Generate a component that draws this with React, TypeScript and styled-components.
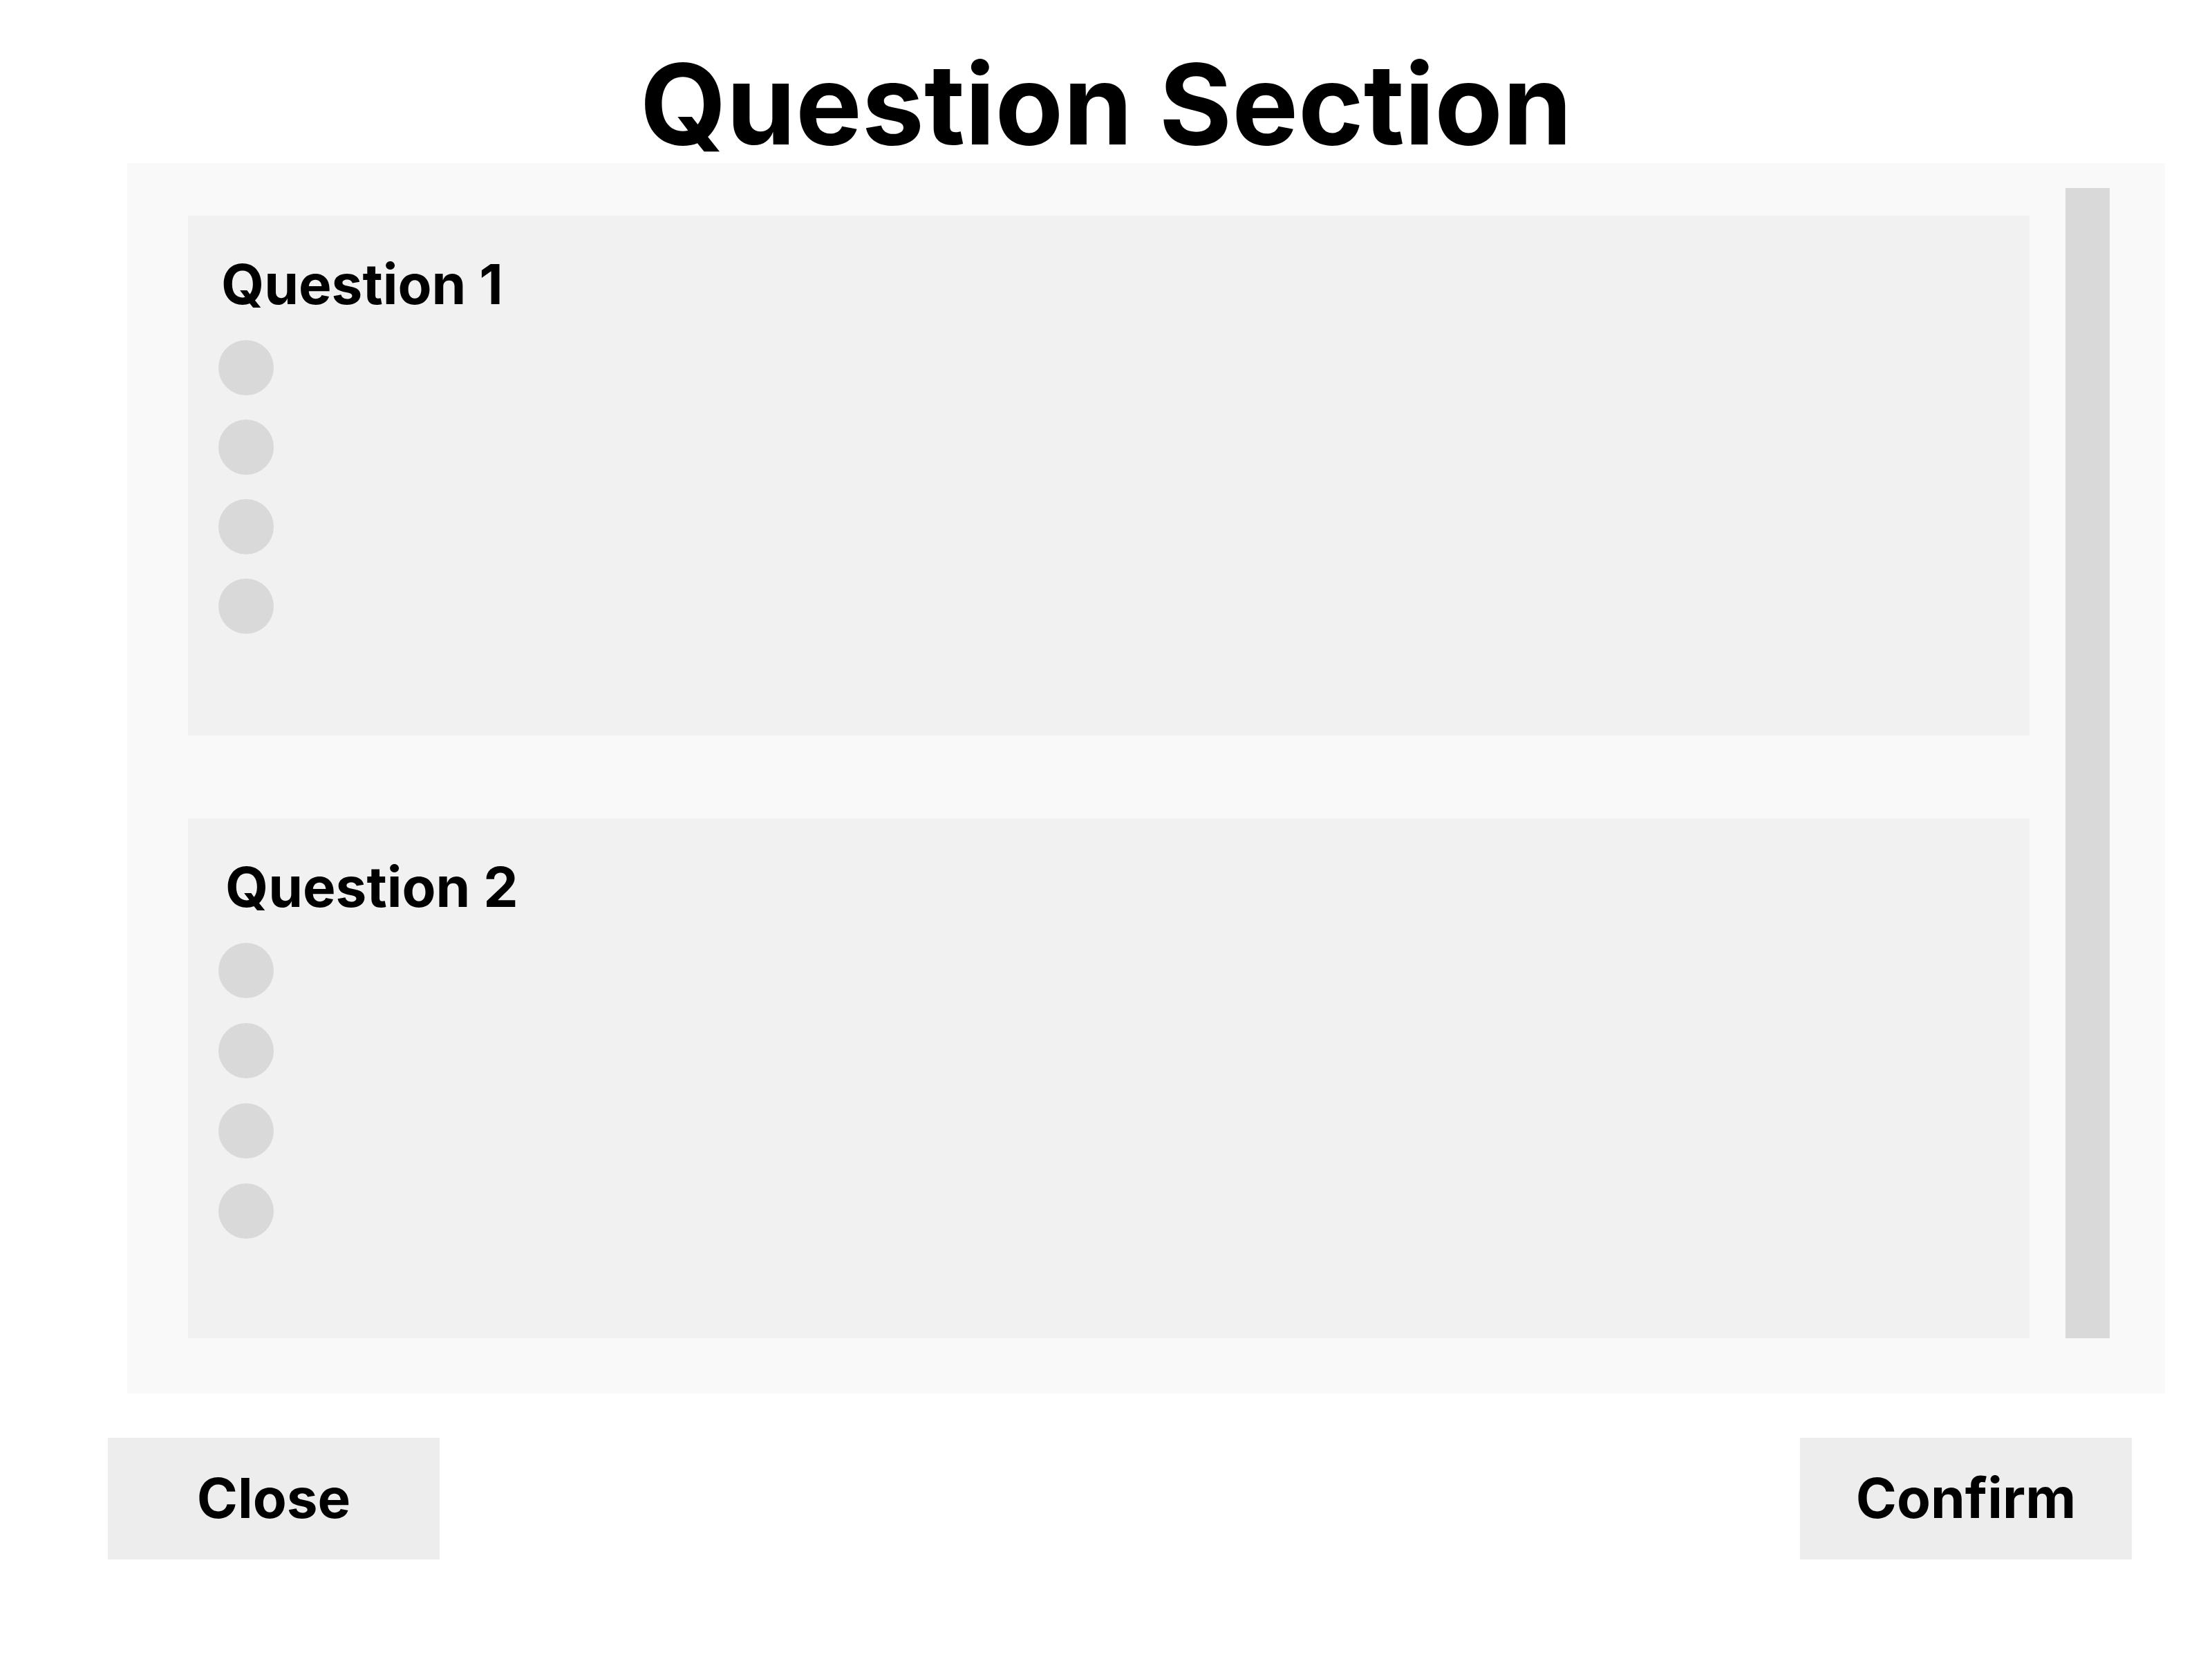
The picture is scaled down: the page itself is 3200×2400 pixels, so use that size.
import React from "react";
import styled, { createGlobalStyle } from "styled-components";

const questions = [
  { title: "Question 1", indent: 4, gap: 35 },
  { title: "Question 2", indent: 10, gap: 36 },
];

const App = () => {
  return (
    <>
      <GlobalStyle />
      <Page>
        <Heading>Question Section</Heading>
        <Panel>
          <QuestionList>
            {questions.map((q) => (
              <QuestionCard key={q.title}>
                <QuestionTitle $indent={q.indent}>{q.title}</QuestionTitle>
                <Options $gap={q.gap}>
                  {[0, 1, 2, 3].map((i) => (
                    <Radio key={i} />
                  ))}
                </Options>
              </QuestionCard>
            ))}
          </QuestionList>
          <ScrollTrack />
        </Panel>
        <ButtonRow>
          <ActionButton>Close</ActionButton>
          <ActionButton>Confirm</ActionButton>
        </ButtonRow>
      </Page>
    </>
  );
};

const GlobalStyle = createGlobalStyle`
  body {
    margin: 0;
    background: #ffffff;
    font-family: Inter, "Noto Sans", sans-serif;
  }
`;
const Page = styled.div`
  width: 3200px;
  display: flex;
  flex-direction: column;
`;
const Heading = styled.h1`
  margin: 0;
  padding-top: 70px;
  font-size: 161px;
  line-height: 1;
  font-weight: 700;
  color: #000;
  text-align: center;
`;
const Panel = styled.div`
  margin: 5px 0 0 184px;
  width: 2948px;
  box-sizing: border-box;
  padding: 36px 80px 80px 88px;
  background: #f9f9f9;
  display: flex;
  gap: 52px;
`;
const QuestionList = styled.div`
  margin-top: 40px;
  width: 2664px;
  display: flex;
  flex-direction: column;
  gap: 120px;
`;
const QuestionCard = styled.div`
  height: 752px;
  box-sizing: border-box;
  padding: 59px 44px 0 44px;
  background: #f1f1f1;
`;
const QuestionTitle = styled.div<{ $indent: number }>`
  margin: 0 0 41px ${(p) => p.$indent}px;
  font-size: 80px;
  line-height: 1;
  font-weight: 700;
  color: #000;
`;
const Options = styled.div<{ $gap: number }>`
  display: flex;
  flex-direction: column;
  gap: ${(p) => p.$gap}px;
`;
const Radio = styled.div`
  width: 80px;
  height: 80px;
  border-radius: 50%;
  background: #d9d9d9;
`;
const ScrollTrack = styled.div`
  width: 64px;
  background: #d9d9d9;
`;
const ButtonRow = styled.div`
  margin-top: 64px;
  padding: 0 116px 0 156px;
  display: flex;
  justify-content: space-between;
`;
const ActionButton = styled.button`
  width: 480px;
  height: 176px;
  border: none;
  padding: 0 0 4px;
  background: #ededed;
  font-family: Inter, "Noto Sans", sans-serif;
  font-size: 80px;
  font-weight: 700;
  color: #000;
`;

export default App;
